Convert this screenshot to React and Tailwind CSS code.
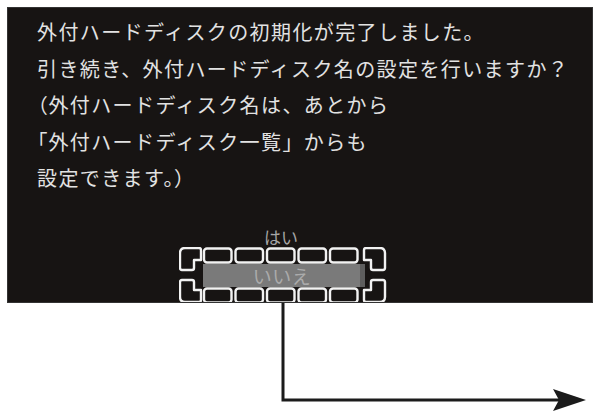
import React from 'react';

const P = ({ children }) => <span className="[font-feature-settings:'palt']">{children}</span>;

const lines = [
  <>外付ハードディスクの初期化が完了しました。</>,
  <>引き続き、外付ハードディスク名の設定を行いますか？</>,
  <><P>（</P>外付ハードディスク名は、あとから</>,
  <><P>「</P>外付ハードディスク一覧」からも</>,
  <>設定できます。<P>）</P></>,
];

const squares = [25, 56.5, 88, 119.5, 151];

function Frame() {
  const corner = 'M6 1 H20 Q22 1 22 3 V13 H15 V21 Q15 23 13 23 H3 Q1 23 1 21 V6 Q1 1 6 1 Z';
  const cornerB = 'M6 55 H20 Q22 55 22 53 V43 H15 V35 Q15 33 13 33 H3 Q1 33 1 35 V50 Q1 55 6 55 Z';
  return (
    <svg width="208" height="57" viewBox="0 0 208 57" className="block">
      <rect x="24" y="17" width="162" height="23" fill="#7a7a7a" />
      <rect x="181" y="17" width="5" height="23" fill="#5e5e5e" />
      <g fill="none" stroke="#f2f2f2" strokeWidth="2.4" strokeLinejoin="round">
        {squares.map((x) => (
          <rect key={'t' + x} x={x} y="1.5" width="27.5" height="14" rx="3" />
        ))}
        {squares.map((x) => (
          <rect key={'b' + x} x={x} y="41.5" width="27.5" height="14" rx="3" />
        ))}
        <path d={corner} />
        <path d={cornerB} />
        <g transform="translate(207 0) scale(-1 1)">
          <path d={corner} />
          <path d={cornerB} />
        </g>
      </g>
    </svg>
  );
}

export default function App() {
  return (
    <div className="relative w-[598px] h-[414px] bg-white overflow-hidden" style={{ fontFamily: '"Noto Sans CJK JP", "Noto Sans", sans-serif' }}>
      <div className="ml-[7px] mt-[7px] w-[586px] h-[296px] bg-[#171413] overflow-hidden flex flex-col border border-[#333]">
        <div className="pl-[29px] pt-[6px] text-[20px] leading-[36.6px] tracking-[1.4px] text-[#e2e2e2] whitespace-nowrap">
          {lines.map((l, i) => (
            <div key={i}>{l}</div>
          ))}
        </div>
        <div className="ml-[171px] mt-[30px] w-[208px] flex flex-col">
          <div className="relative h-[20px]">
            <div className="absolute left-0 right-[4px] top-0 text-center text-[17px] leading-[20px] text-[#a5a5a5]">はい</div>
          </div>
          <div className="relative">
            <Frame />
            <div className="absolute left-[24px] w-[158px] top-[17px] h-[23px] flex items-center justify-center text-[19px] leading-none tracking-[0.5px] text-[#ababab]">いいえ</div>
          </div>
        </div>
      </div>
      <svg className="absolute left-0 top-0" width="598" height="414" viewBox="0 0 598 414">
        <path d="M283 303 V400 H562" fill="none" stroke="#1b1b1b" strokeWidth="3" />
        <path d="M553 389 L586 400 L553 411 L559 400 Z" fill="#1b1b1b" />
      </svg>
    </div>
  );
}
